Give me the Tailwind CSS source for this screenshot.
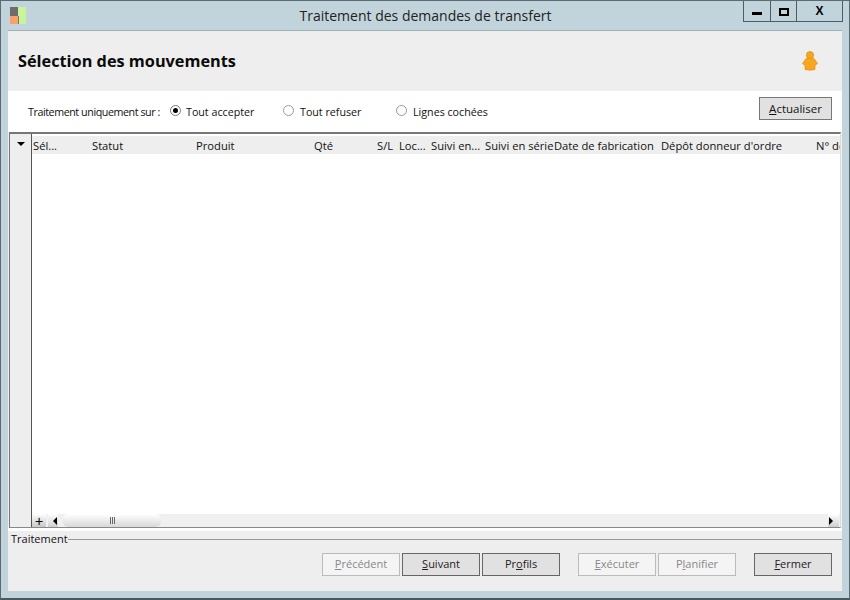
<!DOCTYPE html>
<html lang="fr">
<head>
    <meta charset="UTF-8">
    <title>Traitement des demandes de transfert</title>
    <script src="https://cdn.jsdelivr.net/npm/@tailwindcss/browser@4"></script>
</head>
<body class="w-[850px] h-[600px] overflow-hidden bg-[#c2d4db] font-['Open_Sans','Noto_Sans',sans-serif] text-[#111] text-[11px]">
<div class="w-[850px] h-[600px] flex flex-col border border-[#5b6b73] border-b-2 border-b-[#4a5960]">
    <!-- Title bar -->
    <div class="h-[29px] shrink-0 flex items-start pl-[9px] pr-[6px]">
        <svg class="mt-[6px] shrink-0" width="16" height="17" viewBox="0 0 16 17">
            <rect x="0" y="0" width="8" height="9" fill="#6d6d6d"/>
            <rect x="0" y="9" width="8" height="8" fill="#f9a06c"/>
            <rect x="8" y="0" width="8" height="17" fill="#c8f59a"/>
            <rect x="8" y="9" width="1" height="8" fill="#777"/>
        </svg>
        <div class="flex-1 text-center text-[14px] leading-[30px] text-[#222] pl-[82px]">Traitement des demandes de transfert</div>
        <div class="flex h-[21px] border border-[#4e5c63] border-t-0 w-[100px] shrink-0">
            <div class="w-[27px] border-r border-[#4e5c63] flex items-center justify-center"><div class="w-[10px] h-[3px] mt-[5px] bg-black"></div></div>
            <div class="w-[26px] border-r border-[#4e5c63] flex items-center justify-center"><div class="w-[10px] h-[8px] mt-[1px] border-2 border-black"></div></div>
            <div class="flex-1 flex items-center justify-center font-['Liberation_Sans'] font-bold text-[12px] leading-none text-black">X</div>
        </div>
    </div>

    <!-- Content -->
    <div class="mx-[7px] flex-1 min-h-0 flex flex-col border-t border-[#9fb0b7] bg-[#eeeeee]">
        <div class="h-[60px] shrink-0 flex items-center justify-between pl-[10px] pr-[24px]">
            <h1 class="font-bold text-[16.3px] text-[#0b0b0b]">Sélection des mouvements</h1>
            <svg width="16" height="20" viewBox="0 0 16 20">
                <circle cx="8" cy="4.2" r="3.7" fill="#f5a623" stroke="#d98c10" stroke-width="0.6"/>
                <path d="M4.5 7.5 Q8 6.5 11.5 7.5 Q13 8 13.5 9.5 L15.5 12.5 L13 14.5 L13 18.5 Q8 20 3 18.5 L3 14.5 L0.5 12.5 L2.5 9.5 Q3 8 4.5 7.5 Z" fill="#f8a51f" stroke="#d98c10" stroke-width="0.6"/>
            </svg>
        </div>

        <div class="h-[41px] shrink-0 bg-white flex items-start text-[10.7px] pl-[20px] pr-[10px]">
            <span class="w-[142px] mt-[14px] leading-[14px] whitespace-nowrap tracking-[-0.42px]">Traitement uniquement sur :</span>
            <label class="w-[113px] mt-[14px] flex items-center gap-[5px] leading-[14px]">
                <span class="w-[11px] h-[11px] -mt-[3px] rounded-full border border-[#777] flex items-center justify-center"><span class="w-[5px] h-[5px] rounded-full bg-black"></span></span>
                Tout accepter
            </label>
            <label class="w-[113px] mt-[14px] flex items-center gap-[6px] leading-[14px]">
                <span class="w-[11px] h-[11px] -mt-[3px] rounded-full border border-[#999]"></span>
                Tout refuser
            </label>
            <label class="flex-1 mt-[14px] flex items-center gap-[6px] leading-[14px]">
                <span class="w-[11px] h-[11px] -mt-[3px] rounded-full border border-[#999]"></span>
                Lignes cochées
            </label>
            <button class="w-[73px] h-[23px] mt-[6px] border border-[#777] bg-[#e1e1e1] text-[11.5px] leading-none"><u>A</u>ctualiser</button>
        </div>

        <!-- Grid -->
        <div class="h-[396px] shrink-0 mx-[1px] bg-white border-t-2 border-l border-[#777] border-b border-b-[#888] border-r border-r-[#ddd] flex">
            <div class="w-[21px] shrink-0 bg-[#eeeeee] pt-[8px] flex justify-center">
                <div class="w-0 h-0 border-l-[4px] border-r-[4px] border-t-[4px] border-l-transparent border-r-transparent border-t-black"></div>
            </div>
            <div class="flex-1 min-w-0 flex flex-col border-l border-[#555] pt-[1px]">
                <div class="h-[18px] mt-[1px] shrink-0 bg-[#eeeeee] flex text-[11.2px] leading-[20px] pl-[1px] overflow-hidden whitespace-nowrap">
                    <span class="w-[59px] shrink-0">Sél...</span>
                    <span class="w-[104px] shrink-0">Statut</span>
                    <span class="w-[118px] shrink-0">Produit</span>
                    <span class="w-[63px] shrink-0">Qté</span>
                    <span class="w-[22px] shrink-0">S/L</span>
                    <span class="w-[32px] shrink-0">Loc...</span>
                    <span class="w-[54px] shrink-0">Suivi en...</span>
                    <span class="w-[69px] shrink-0">Suivi en série</span>
                    <span class="w-[107px] shrink-0">Date de fabrication</span>
                    <span class="w-[155px] shrink-0">Dépôt donneur d'ordre</span>
                    <span class="shrink-0">N° de</span>
                </div>
                <div class="flex-1"></div>
                <!-- Scrollbar -->
                <div class="h-[13px] shrink-0 bg-[#f0f0f0] flex items-stretch">
                    <div class="w-[14px] bg-gradient-to-b from-white to-[#c8c8c8] flex items-center justify-center text-[14px] leading-none font-['Liberation_Sans'] text-black">+</div>
                    <div class="w-[2px]"></div>
                    <div class="w-[10px] pr-[1px] bg-gradient-to-b from-white to-[#cfcfcf] flex items-center justify-end">
                        <div class="w-0 h-0 border-y-[4px] border-r-[4px] border-y-transparent border-r-black"></div>
                    </div>
                    <div class="w-[5px]"></div>
                    <div class="w-[98px] rounded-[5px] bg-gradient-to-b from-white to-[#d8d8d8] flex items-center justify-center gap-[1px] pl-[1px]">
                        <span class="w-[1px] h-[7px] bg-[#666]"></span><span class="w-[1px] h-[7px] bg-[#666]"></span><span class="w-[1px] h-[7px] bg-[#666]"></span>
                    </div>
                    <div class="flex-1"></div>
                    <div class="w-[11px] mr-[1px] pl-[1px] bg-gradient-to-b from-white to-[#cfcfcf] flex items-center justify-start">
                        <div class="w-0 h-0 border-y-[4px] border-l-[4px] border-y-transparent border-l-black"></div>
                    </div>
                </div>
            </div>
        </div>

        <!-- Traitement group -->
        <div class="h-[3px] shrink-0 bg-white"></div>
        <div class="flex items-center h-[14px] mt-[1px] shrink-0 pl-[3px]">
            <span class="text-[11px] leading-[14px]">Traitement</span>
            <div class="flex-1 h-[1px] bg-[#999]"></div>
        </div>
        <div class="flex pl-[314px] mt-[7px] text-[11px] text-[#222]">
            <button class="w-[78px] h-[23px] border border-[#bbb] bg-[#f4f4f4] text-[#888]"><u>P</u>récédent</button>
            <button class="w-[78px] h-[23px] ml-[2px] border border-[#666] bg-[#e1e1e1]"><u>S</u>uivant</button>
            <button class="w-[78px] h-[23px] ml-[2px] border border-[#666] bg-[#e1e1e1]">Pr<u>o</u>fils</button>
            <button class="w-[78px] h-[23px] ml-[18px] border border-[#bbb] bg-[#f4f4f4] text-[#888]"><u>E</u>xécuter</button>
            <button class="w-[78px] h-[23px] ml-[2px] border border-[#bbb] bg-[#f4f4f4] text-[#888]">P<u>l</u>anifier</button>
            <button class="w-[78px] h-[23px] ml-[18px] border border-[#666] bg-[#e1e1e1]"><u>F</u>ermer</button>
        </div>
    </div>
    <div class="h-[7px] shrink-0"></div>
</div>
</body>
</html>
